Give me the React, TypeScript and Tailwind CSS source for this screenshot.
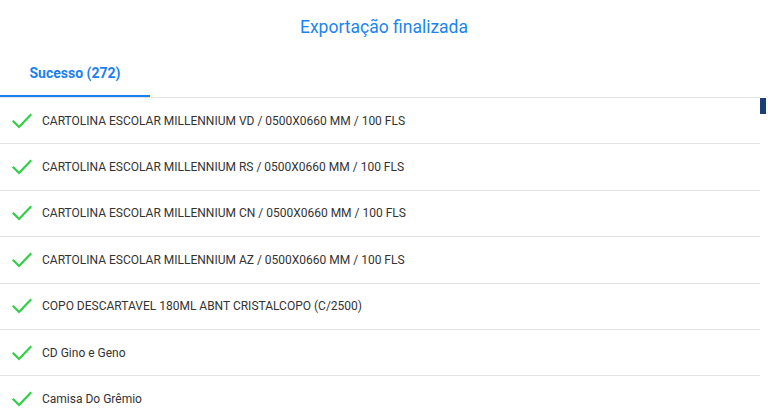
import React from "react";

const items = [
  "CARTOLINA ESCOLAR MILLENNIUM VD / 0500X0660 MM / 100 FLS",
  "CARTOLINA ESCOLAR MILLENNIUM RS / 0500X0660 MM / 100 FLS",
  "CARTOLINA ESCOLAR MILLENNIUM CN / 0500X0660 MM / 100 FLS",
  "CARTOLINA ESCOLAR MILLENNIUM AZ / 0500X0660 MM / 100 FLS",
  "COPO DESCARTAVEL 180ML ABNT CRISTALCOPO (C/2500)",
  "CD Gino e Geno",
  "Camisa Do Grêmio",
];

function Check() {
  return (
    <svg width="20" height="16" viewBox="0 0 20 16" fill="none" className="shrink-0">
      <path d="M1.5 8.5 L7 14 L18.5 2" stroke="#2fd043" strokeWidth="2.2" strokeLinecap="square" />
    </svg>
  );
}

export default function App() {
  return (
    <div className="w-[768px] h-[415px] overflow-hidden bg-white font-['Roboto',sans-serif] flex flex-col">
      {/* Header */}
      <div className="h-[54px] flex items-center justify-center">
        <h1 className="text-[17.5px] text-[#1a84f2]">Exportação finalizada</h1>
      </div>

      {/* Tabs */}
      <div className="flex w-[760px] border-b border-[#e3e3e3]">
        <div className="w-[150px] h-[43px] flex items-center justify-center border-b-2 border-[#1a7ff0] text-[14px] font-bold text-[#1a7ff0] pb-[2px]">
          Sucesso (272)
        </div>
      </div>

      {/* List */}
      <div className="flex flex-1 min-h-0">
        <div className="flex-1 min-w-0">
          {items.map((item, i) => (
            <div
              key={i}
              className="h-[46.4px] flex items-center gap-[10px] pl-[12px] border-b border-[#e3e3e3] text-[12px] text-[#333333]"
            >
              <Check />
              <span>{item}</span>
            </div>
          ))}
        </div>
        <div className="w-[8px] flex flex-col">
          <div className="h-[16px] bg-[#1b3d78] w-[6px]" />
        </div>
      </div>
    </div>
  );
}
